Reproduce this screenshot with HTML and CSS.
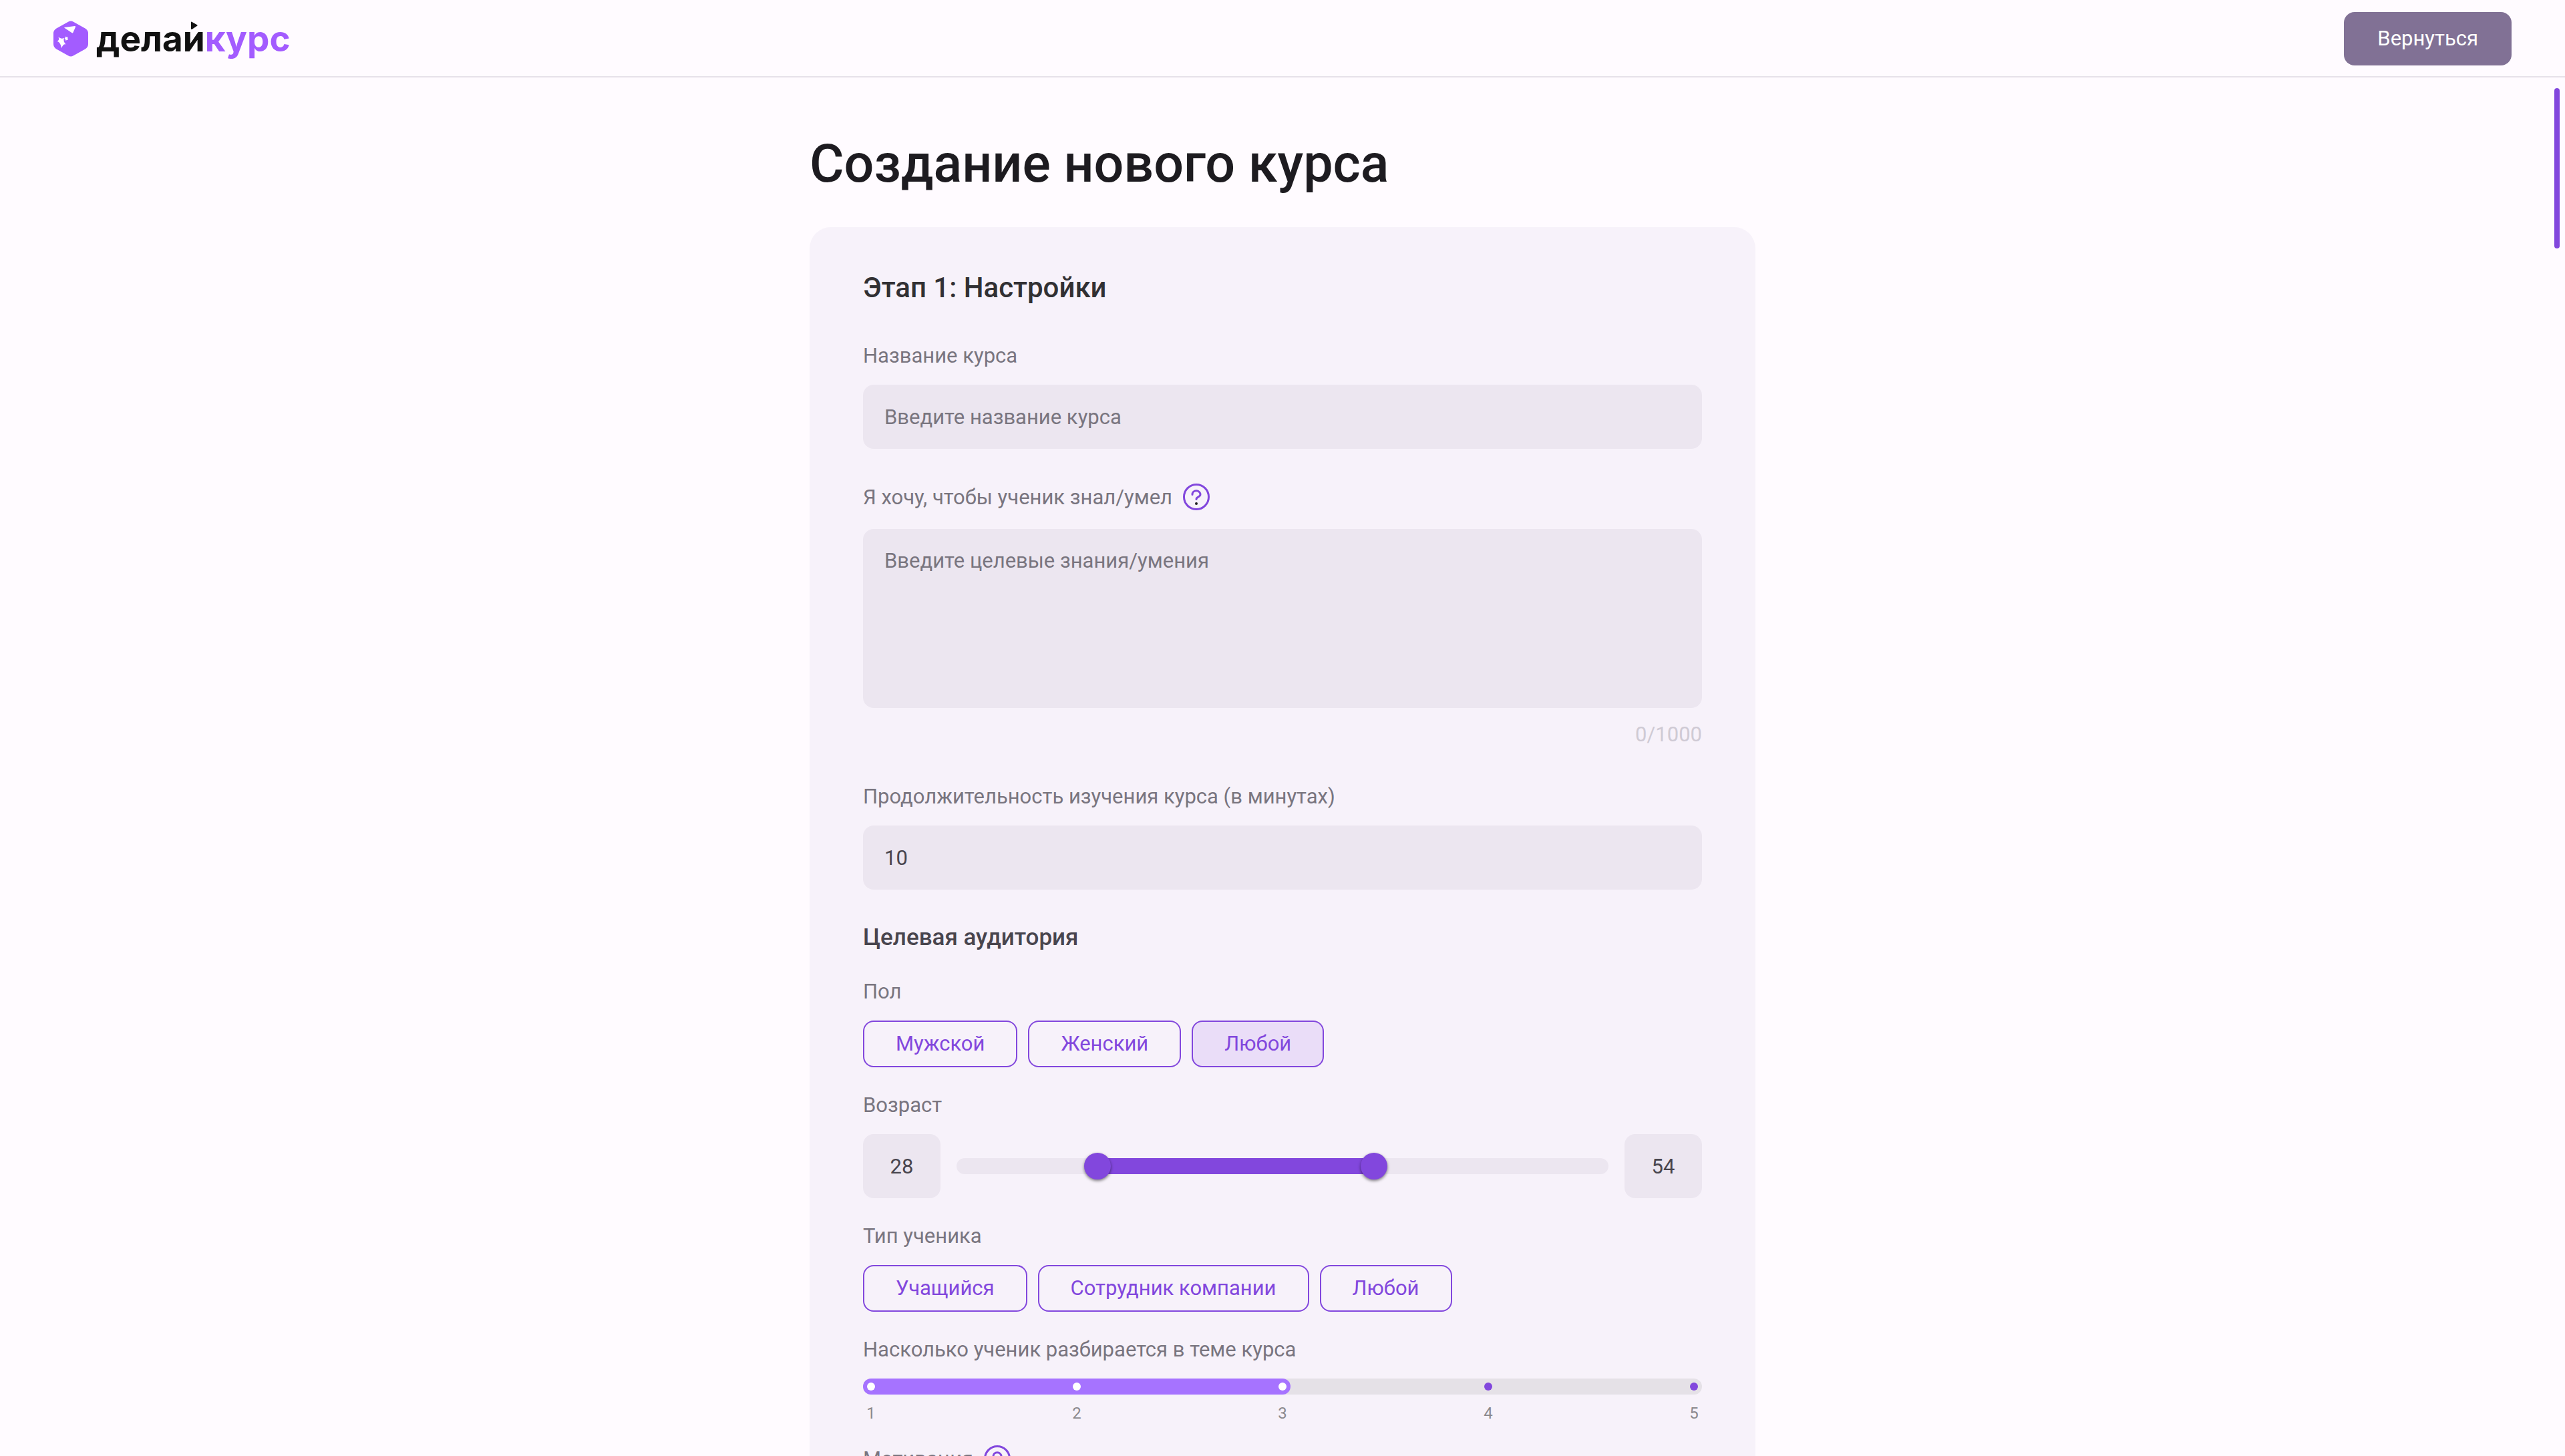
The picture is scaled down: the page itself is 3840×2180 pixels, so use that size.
FILE: index.html
```html
<!DOCTYPE html>
<html lang="ru">
<head>
<meta charset="utf-8">
<meta name="viewport" content="width=device-width, initial-scale=1">
<title>Создание нового курса</title>
<link rel="stylesheet" href="styles.css">
</head>
<body>
<header class="header">
  <a class="logo" href="#">
    <svg class="logo-mark" viewBox="0 0 52 54" aria-hidden="true">
      <path fill="#a35cff" d="M22 1.700Q26 -.7 30 1.700L47.500 11.500Q52 14 52 19V35Q52 40 47.500 42.500L30 52.300Q26 54.700 22 52.300L4.500 42.500Q0 40 0 35V19Q0 14 4.500 11.500Z"/>
      <path fill="#fff" d="M16.500 10.800Q15.500 10.200 16.800 9.900L32 8Q33.600 7.900 33 9.500L29.500 17.500Q28.800 19 27.400 18Z"/>
      <path fill="#fff" d="M7.500 24.500Q11.500 28 16 25.800Q14 30.500 18.500 35.500Q14.500 34.500 12.200 41Q11 33 5.500 30.500Q9.500 29.500 7.500 24.500Z"/>
      <path fill="#fff" d="M17.500 23.500Q19.500 25.200 21.500 24.200Q20.600 26.500 22 28.500Q20 28 18.600 30Q18.500 27.500 16.500 26.500Q18.300 26 17.500 23.500Z"/>
    </svg>
    <span class="wordmark"><span>дела<span class="play-letter">й<svg viewBox="0 0 28 14" aria-hidden="true"><rect width="28" height="14" fill="#fffbff"/><path fill="#111" d="M10 1.800Q10 0 11.600 .9L19.100 5.200Q20.500 6 19.100 6.800L11.600 11.800Q10 12.600 10 11Z"/></svg></span></span><span class="wordmark-accent">курс</span></span>
  </a>
  <button class="button-back" type="button">Вернуться</button>
</header>

<main class="page">
  <div class="content">
    <h1 class="title">Создание нового курса</h1>
    <form class="card">
      <h2 class="step-title">Этап 1: Настройки</h2>

      <div class="field">
        <label class="label" for="name">Название курса</label>
        <input class="input" id="name" type="text" placeholder="Введите название курса">
      </div>

      <div class="field">
        <div class="label-row">
          <label class="label" for="goal">Я хочу, чтобы ученик знал/умел</label>
          <button class="help" type="button" aria-label="Подсказка">
            <svg viewBox="0 0 48 48"><circle cx="24" cy="24" r="18.500" fill="none" stroke="#8247dd" stroke-width="3"/><path d="M18 20.500C18 17 20.500 14.800 24 14.800S30 17.400 30 20.300C30 24.600 24 23.600 24 27.400" fill="none" stroke="#8247dd" stroke-width="3" stroke-linecap="round"/><circle cx="24" cy="34" r="2" fill="#222"/></svg>
          </button>
        </div>
        <textarea class="input input-area" id="goal" maxlength="1000" placeholder="Введите целевые знания/умения"></textarea>
        <div class="counter">0/1000</div>
      </div>

      <div class="field">
        <label class="label" for="duration">Продолжительность изучения курса (в минутах)</label>
        <input class="input" id="duration" type="text" inputmode="numeric" value="10">
      </div>

      <section class="audience">
        <h3 class="section-title">Целевая аудитория</h3>

        <div class="group" role="group" aria-labelledby="gender">
          <span class="label" id="gender">Пол</span>
          <div class="chips">
            <button class="chip" type="button">Мужской</button>
            <button class="chip" type="button">Женский</button>
            <button class="chip chip-active" type="button" aria-pressed="true">Любой</button>
          </div>
        </div>

        <div class="group" role="group" aria-labelledby="age">
          <span class="label" id="age">Возраст</span>
          <div class="age">
            <input class="input age-value" type="text" inputmode="numeric" value="28" aria-label="Возраст от">
            <div class="range">
              <div class="range-fill" style="left:21.700%;right:35.900%"></div>
              <input class="range-input" type="range" min="16" max="75" value="28" aria-label="Минимальный возраст">
              <input class="range-input" type="range" min="16" max="75" value="54" aria-label="Максимальный возраст">
            </div>
            <input class="input age-value" type="text" inputmode="numeric" value="54" aria-label="Возраст до">
          </div>
        </div>

        <div class="group" role="group" aria-labelledby="kind">
          <span class="label" id="kind">Тип ученика</span>
          <div class="chips">
            <button class="chip" type="button">Учащийся</button>
            <button class="chip" type="button">Сотрудник компании</button>
            <button class="chip" type="button">Любой</button>
          </div>
        </div>

        <div class="group" role="radiogroup" aria-labelledby="level">
          <span class="label" id="level">Насколько ученик разбирается в теме курса</span>
          <div class="scale">
            <div class="scale-track">
              <div class="scale-fill"></div>
              <input class="dot dot-on" type="radio" name="level" id="l1">
              <input class="dot dot-on" type="radio" name="level" id="l2">
              <input class="dot dot-on" type="radio" name="level" id="l3" checked>
              <input class="dot" type="radio" name="level" id="l4">
              <input class="dot" type="radio" name="level" id="l5">
            </div>
            <div class="scale-marks">
              <label for="l1">1</label>
              <label for="l2">2</label>
              <label for="l3">3</label>
              <label for="l4">4</label>
              <label for="l5">5</label>
            </div>
          </div>
        </div>

        <div class="group">
          <div class="label-row">
            <label class="label" for="motivation">Мотивация</label>
            <button class="help" type="button" aria-label="Подсказка">
              <svg viewBox="0 0 48 48"><circle cx="24" cy="24" r="18.500" fill="none" stroke="#8247dd" stroke-width="3"/><path d="M18 20.500C18 17 20.500 14.800 24 14.800S30 17.400 30 20.300C30 24.600 24 23.600 24 27.400" fill="none" stroke="#8247dd" stroke-width="3" stroke-linecap="round"/><circle cx="24" cy="34" r="2" fill="#222"/></svg>
            </button>
          </div>
          <input class="input" id="motivation" type="text">
        </div>
      </section>
    </form>
  </div>
  <div class="scroll-thumb" aria-hidden="true"></div>
</main>
</body>
</html>
```
FILE: styles.css
```css
* {
  box-sizing: border-box;
}

body {
  margin: 0;
  height: 100vh;
  display: flex;
  flex-direction: column;
  overflow: hidden;
  background: #fffbff;
  color: #48454e;
  font-family: Roboto, "Liberation Sans", sans-serif;
  font-size: 31px;
  line-height: 40px;
}

button,
input,
textarea {
  margin: 0;
  font: inherit;
  color: inherit;
}

h1,
h2,
h3 {
  margin: 0;
}

/* Header */
.header {
  flex: none;
  display: flex;
  align-items: center;
  justify-content: space-between;
  padding: 18px 80px 16px;
  border-bottom: 2px solid #e6e1e9;
}

.logo {
  display: flex;
  align-items: center;
  gap: 12px;
  color: #111;
  text-decoration: none;
}

.logo-mark {
  width: 52px;
  height: 54px;
}

.wordmark {
  font-family: Inter, "Liberation Sans", sans-serif;
  font-size: 53px;
  font-weight: 700;
  line-height: 56px;
}

.wordmark-accent {
  color: #a35cff;
}

.play-letter {
  position: relative;
}

.play-letter svg {
  position: absolute;
  left: 2px;
  top: 6px;
  width: 28px;
  height: 14px;
}

.button-back {
  height: 80px;
  padding: 0 50px;
  border: 0;
  border-radius: 16px;
  background: #817195;
  color: #fff;
}

/* Page */
.page {
  position: relative;
  flex: 1;
  min-height: 0;
  overflow: hidden;
  padding: 80px 48px;
}

.content {
  max-width: 1416px;
  margin: 0 auto;
  display: flex;
  flex-direction: column;
  gap: 48px;
}

.title {
  padding-top: 2px;
  font-size: 79px;
  font-weight: 500;
  line-height: 94px;
  color: #1d1b20;
}

.scroll-thumb {
  position: absolute;
  top: 16px;
  right: 8px;
  width: 8px;
  height: 240px;
  border-radius: 4px;
  background: #8247dd;
}

.card {
  display: flex;
  flex-direction: column;
  gap: 48px;
  padding: 64px 80px;
  border-radius: 32px;
  background: #f7f2fa;
}

.step-title {
  margin-bottom: 8px;
  padding-top: 2px;
  font-size: 42px;
  font-weight: 500;
  line-height: 50px;
  color: #313033;
}

/* Fields */
.field,
.group {
  display: flex;
  flex-direction: column;
  gap: 24px;
}

.label {
  padding-top: 2px;
  line-height: 38px;
  color: #79757f;
}

.label-row {
  display: flex;
  align-items: center;
  gap: 12px;
}

.help {
  display: flex;
  padding: 0;
  border: 0;
  background: none;
}

.help svg {
  width: 48px;
  height: 48px;
}

.input {
  width: 100%;
  height: 96px;
  padding: 0 32px;
  border: 0;
  border-radius: 16px;
  background: #ece6f0;
}

.input::placeholder {
  color: #79757f;
  opacity: 1;
}

.input-area {
  display: block;
  height: 268px;
  padding: 28px 32px;
  resize: none;
}

.counter {
  margin-top: -8px;
  line-height: 48px;
  text-align: right;
  color: #cfcad4;
}

/* Audience */
.audience {
  display: flex;
  flex-direction: column;
  gap: 36px;
}

.section-title {
  font-size: 35px;
  font-weight: 500;
  line-height: 48px;
}

.chips {
  display: flex;
  gap: 16px;
}

.chip {
  height: 70px;
  padding: 0 47px;
  border: 2px solid #8247dd;
  border-radius: 16px;
  background: transparent;
  color: #8247dd;
}

.chip-active {
  background: #eaddf8;
}

.age {
  display: flex;
  align-items: center;
  gap: 24px;
}

.age-value {
  flex: none;
  width: 116px;
  padding: 0;
  text-align: center;
}

.range {
  position: relative;
  flex: 1;
  height: 24px;
  border-radius: 12px;
  background: #ece6f0;
}

.range-fill {
  position: absolute;
  top: 0;
  bottom: 0;
  background: #8247dd;
}

.range-input {
  position: absolute;
  left: 0;
  top: -8px;
  width: calc(100% + 4px);
  height: 40px;
  appearance: none;
  background: none;
  pointer-events: none;
}

.range-input::-webkit-slider-thumb {
  appearance: none;
  width: 40px;
  height: 40px;
  border-radius: 50%;
  background: #8247dd;
  box-shadow: 0 2px 4px rgba(0, 0, 0, 0.5);
  pointer-events: auto;
}

/* Level scale */
.scale {
  display: flex;
  flex-direction: column;
  gap: 20px;
}

.scale-track {
  position: relative;
  display: flex;
  align-items: center;
  justify-content: space-between;
  height: 24px;
  padding: 0 6px;
  border-radius: 12px;
  background: #e5e1e7;
}

.scale-fill {
  position: absolute;
  left: 0;
  top: 0;
  width: calc(50% + 12px);
  height: 24px;
  border-radius: 12px;
  background: #a673ff;
}

.dot {
  position: relative;
  appearance: none;
  width: 12px;
  height: 12px;
  border-radius: 50%;
  background: #8247dd;
}

.dot-on {
  background: #fff;
}

.scale-marks {
  display: flex;
  justify-content: space-between;
  padding: 0 4px;
  font-size: 24px;
  line-height: 16px;
  color: #8b898d;
}

.scale-marks label {
  width: 16px;
  text-align: center;
}
```
